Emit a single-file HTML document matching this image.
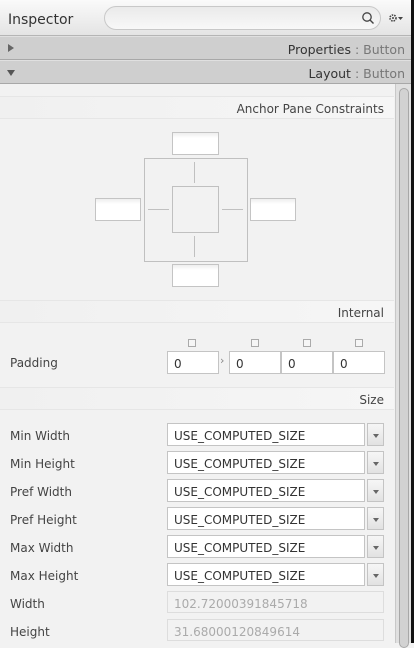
<!DOCTYPE html>
<html><head><style>
*{box-sizing:border-box;margin:0;padding:0}
body{width:414px;height:643px;overflow:hidden;background:#f2f2f2;font-family:"DejaVu Sans","Liberation Sans",sans-serif;font-size:12px;color:#333;position:relative}
.a{position:absolute}
.hdr{left:0;top:0;width:411px;height:36px;background:linear-gradient(#fafafa,#e4e4e4);border-bottom:1px solid #b5b5b5}
.bar{left:0;width:411px;height:24px;background:#cfcfcf;border-bottom:1px solid #a8a8a8;border-top:1px solid #e0e0e0}
.bar span{position:absolute;right:6px;top:5px;font-size:12.5px;color:#333}
.bar span i{font-style:normal;color:#777}
.sec{left:0;width:394px;height:23px;border-top:1px solid #e6e6e6;border-bottom:1px solid #e6e6e6;background:linear-gradient(90deg,#f0f0f0,#f6f6f6)}
.sec span{position:absolute;right:10px;top:5px;color:#444}
.lbl{left:10px;color:#444}
.box{background:linear-gradient(#eee,#fff 5px);border:1px solid #c4c4c4}
.tf{background:#fff;border:1px solid #c4c4c4;height:23px;padding:5px 0 0 6px;color:#333}
.cb{width:17px;height:23px;border:1px solid #c4c4c4;background:linear-gradient(#f6f6f6,#e2e2e2)}
.cb:after{content:"";position:absolute;left:5px;top:10px;border-left:3px solid transparent;border-right:3px solid transparent;border-top:4px solid #666}
.ro{background:#f2f2f2;border:1px solid #ddd;height:22px;padding:5px 0 0 6px;color:#aaa;width:217px;left:167px}
.chk{width:8px;height:8px;border:1px solid #aaa;background:#f6f6f6}
.ln{background:#c0c0c0}
</style></head><body>
<div class="a hdr"></div>
<div class="a" style="left:8px;top:12px;font-size:14px;color:#333">Inspector</div>
<div class="a" style="left:104px;top:6px;width:277px;height:24px;border:1px solid #c8c8c8;border-radius:12px;background:linear-gradient(#eaeaea,#f8f8f8)"></div>
<svg class="a" style="left:361px;top:11px" width="14" height="14"><circle cx="6" cy="6" r="4.2" fill="none" stroke="#444" stroke-width="1.3"/><line x1="9" y1="9" x2="12.5" y2="12.5" stroke="#444" stroke-width="1.4"/></svg>
<svg class="a" style="left:388px;top:12px" width="16" height="12"><circle cx="5" cy="6" r="3" fill="none" stroke="#444" stroke-width="1.6" stroke-dasharray="1.5 1"/><circle cx="5" cy="6" r="1" fill="#444"/><path d="M10 5h5l-2.5 3z" fill="#444"/></svg>
<div class="a bar" style="top:36px"><svg class="a" style="left:8px;top:7px" width="6" height="8"><path d="M0 0L6 4L0 8z" fill="#666"/></svg><span>Properties <i>: Button</i></span></div>
<div class="a bar" style="top:60px"><svg class="a" style="left:7px;top:9px" width="8" height="6"><path d="M0 0H8L4 6z" fill="#555"/></svg><span>Layout <i>: Button</i></span></div>
<div class="a" style="left:395px;top:84px;width:16px;height:559px;background:#e0e0e0;border-left:1px solid #c8c8c8"></div>
<div class="a" style="left:399px;top:88px;width:10px;height:560px;border:1px solid #a8a8a8;border-radius:5px;background:#d2d2d2"></div>
<div class="a" style="left:411px;top:0;width:3px;height:643px;background:#111"></div>

<div class="a sec" style="top:96px"><span>Anchor Pane Constraints</span></div>
<div class="a box" style="left:172px;top:132px;width:47px;height:23px"></div>
<div class="a box" style="left:95px;top:198px;width:46px;height:23px"></div>
<div class="a box" style="left:250px;top:198px;width:46px;height:23px"></div>
<div class="a box" style="left:172px;top:264px;width:47px;height:23px"></div>
<div class="a" style="left:144px;top:158px;width:104px;height:104px;border:1px solid #c0c0c0"></div>
<div class="a" style="left:172px;top:186px;width:47px;height:47px;border:1px solid #c0c0c0"></div>
<div class="a ln" style="left:194px;top:162px;width:1px;height:21px"></div>
<div class="a ln" style="left:194px;top:236px;width:1px;height:21px"></div>
<div class="a ln" style="left:148px;top:209px;width:21px;height:1px"></div>
<div class="a ln" style="left:222px;top:209px;width:21px;height:1px"></div>

<div class="a sec" style="top:300px"><span>Internal</span></div>
<div class="a chk" style="left:188px;top:339px"></div>
<div class="a chk" style="left:251px;top:339px"></div>
<div class="a chk" style="left:303px;top:339px"></div>
<div class="a chk" style="left:355px;top:339px"></div>
<div class="a lbl" style="top:356px">Padding</div>
<div class="a tf" style="left:167px;top:351px;width:52px">0</div>
<div class="a" style="left:220px;top:354px;color:#888;font-size:11px">›</div>
<div class="a tf" style="left:229px;top:351px;width:52px">0</div>
<div class="a tf" style="left:281px;top:351px;width:52px">0</div>
<div class="a tf" style="left:333px;top:351px;width:52px">0</div>

<div class="a sec" style="top:387px"><span>Size</span></div>

<div class="a lbl" style="top:429px">Min Width</div>
<div class="a tf" style="left:167px;top:423px;width:198px">USE_COMPUTED_SIZE</div><div class="a cb" style="left:367px;top:423px"></div>
<div class="a lbl" style="top:457px">Min Height</div>
<div class="a tf" style="left:167px;top:451px;width:198px">USE_COMPUTED_SIZE</div><div class="a cb" style="left:367px;top:451px"></div>
<div class="a lbl" style="top:485px">Pref Width</div>
<div class="a tf" style="left:167px;top:479px;width:198px">USE_COMPUTED_SIZE</div><div class="a cb" style="left:367px;top:479px"></div>
<div class="a lbl" style="top:513px">Pref Height</div>
<div class="a tf" style="left:167px;top:507px;width:198px">USE_COMPUTED_SIZE</div><div class="a cb" style="left:367px;top:507px"></div>
<div class="a lbl" style="top:541px">Max Width</div>
<div class="a tf" style="left:167px;top:535px;width:198px">USE_COMPUTED_SIZE</div><div class="a cb" style="left:367px;top:535px"></div>
<div class="a lbl" style="top:569px">Max Height</div>
<div class="a tf" style="left:167px;top:563px;width:198px">USE_COMPUTED_SIZE</div><div class="a cb" style="left:367px;top:563px"></div>
<div class="a lbl" style="top:597px">Width</div>
<div class="a ro" style="top:591px">102.72000391845718</div>
<div class="a lbl" style="top:625px">Height</div>
<div class="a ro" style="top:619px">31.68000120849614</div>
</body></html>
